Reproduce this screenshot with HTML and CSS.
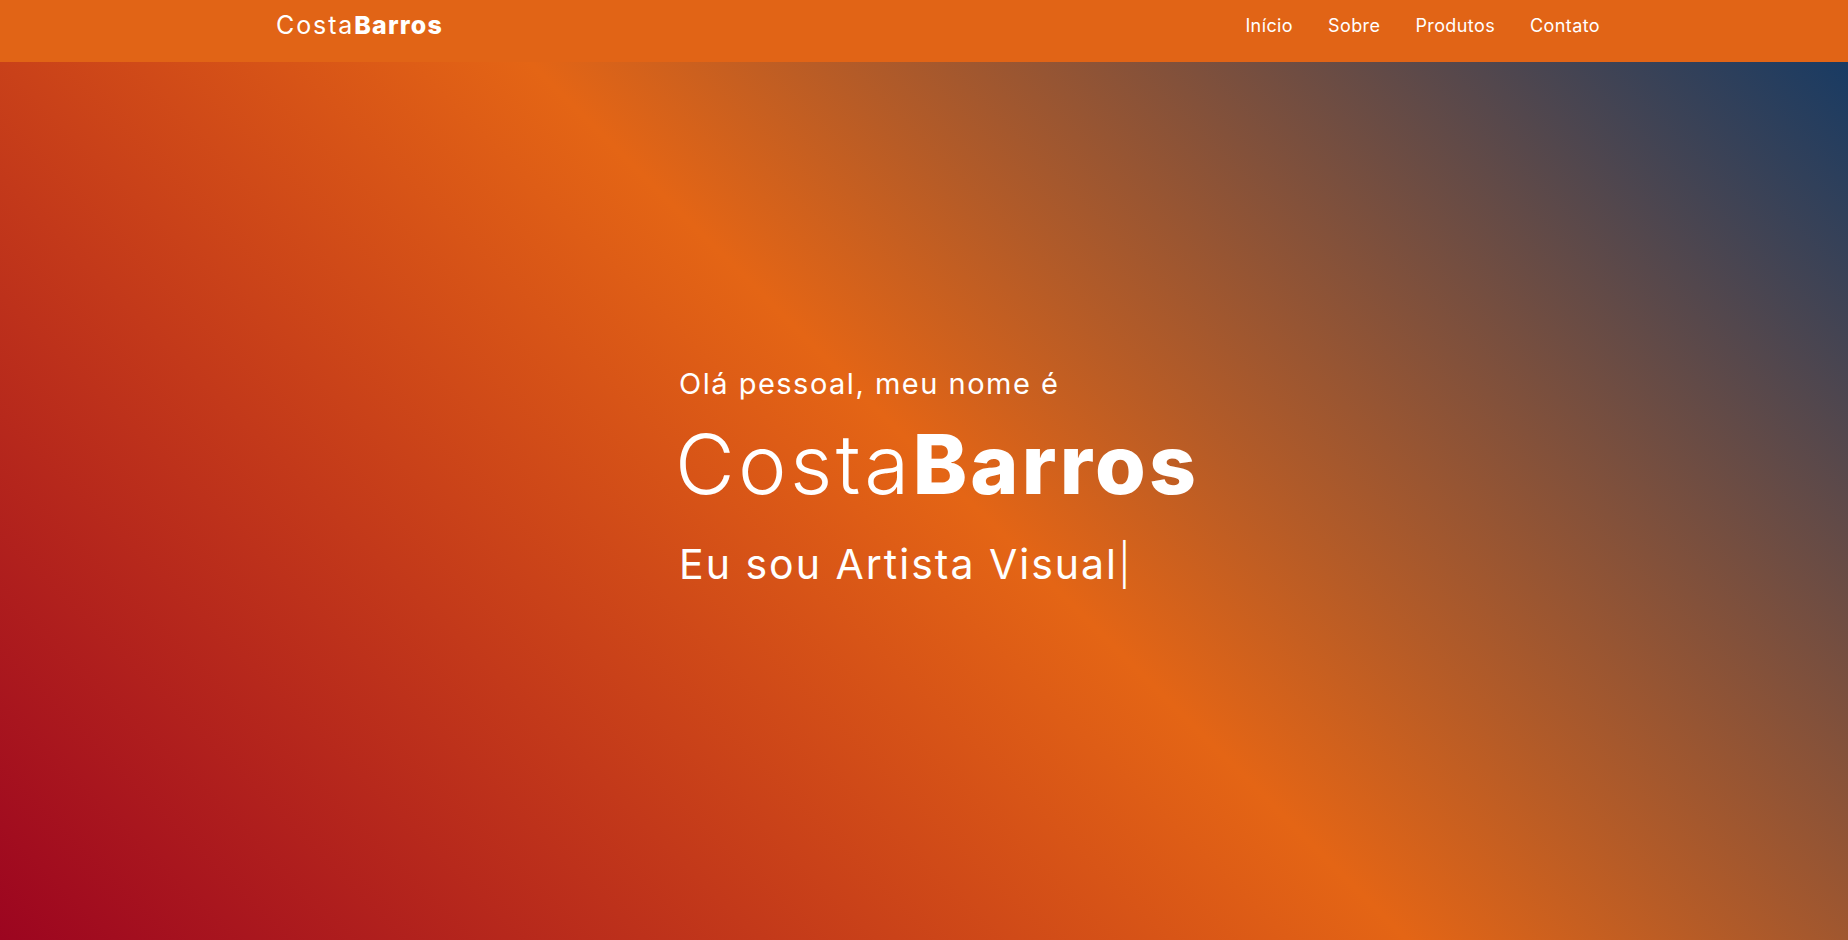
FILE: index.html
```html
<!DOCTYPE html>
<html lang="pt-BR">
<head>
<meta charset="utf-8">
<title>CostaBarros</title>
<link rel="stylesheet" href="styles.css">
</head>
<body>
<header class="navbar">
  <div class="nav-container">
    <a class="brand" href="#">Costa<b>Barros</b></a>
    <nav>
      <ul class="nav-links">
        <li><a href="#">Início</a></li>
        <li><a href="#">Sobre</a></li>
        <li><a href="#">Produtos</a></li>
        <li><a href="#">Contato</a></li>
      </ul>
    </nav>
  </div>
</header>
<section class="hero">
  <div class="hero-content">
    <p class="hello">Olá pessoal, meu nome é</p>
    <h1 class="name">Costa<b>Barros</b></h1>
    <p class="role">Eu sou Artista Visual<span class="cursor">|</span></p>
  </div>
</section>
</body>
</html>
```

FILE: styles.css
```css
* { box-sizing: border-box; }
html, body { margin: 0; padding: 0; }
body {
  font-family: Inter, "Open Sans", "DejaVu Sans", sans-serif;
  color: #fff;
  overflow: hidden;
}
.navbar {
  position: fixed;
  top: 0; left: 0; right: 0;
  height: 62px;
  background: #e16416;
  z-index: 10;
}
.nav-container {
  height: 100%;
  display: flex;
  align-items: center;
  justify-content: space-between;
  padding: 0 248px 0 276px;
}
.brand {
  color: #fff;
  text-decoration: none;
  font-size: 25px;
  font-weight: 400;
  letter-spacing: 1.9px;
  margin-top: -12px;
}
.brand b { font-weight: 800; letter-spacing: 1.2px; }
.nav-links {
  list-style: none;
  margin: 0;
  padding: 0;
  display: flex;
  gap: 35px;
  margin-top: -12px;
}
.nav-links a {
  color: #fff;
  text-decoration: none;
  font-size: 18px;
  font-weight: 400;
  letter-spacing: 0.4px;
}
.hero {
  height: 100vh;
  background: linear-gradient(45deg, #9c0520 0%, #e46515 50.5%, #0f3967 100%);
  display: flex;
  align-items: center;
  justify-content: center;
}
.hero-content {
  width: 490px;
  white-space: nowrap;
  margin-top: 15px;
}
.hello {
  margin: 0;
  font-size: 29px;
  font-weight: 400;
  letter-spacing: 1.5px;
}
.name {
  margin: 19px 0 28px -4px;
  font-size: 82px;
  font-weight: 300;
  line-height: 1.1;
  letter-spacing: 3.4px;
}
.name b { font-weight: 800; letter-spacing: 3.2px; }
.role {
  margin: 0;
  font-size: 41px;
  font-weight: 400;
  letter-spacing: 2px;
}
.cursor { font-weight: 300; letter-spacing: 0; }
```
